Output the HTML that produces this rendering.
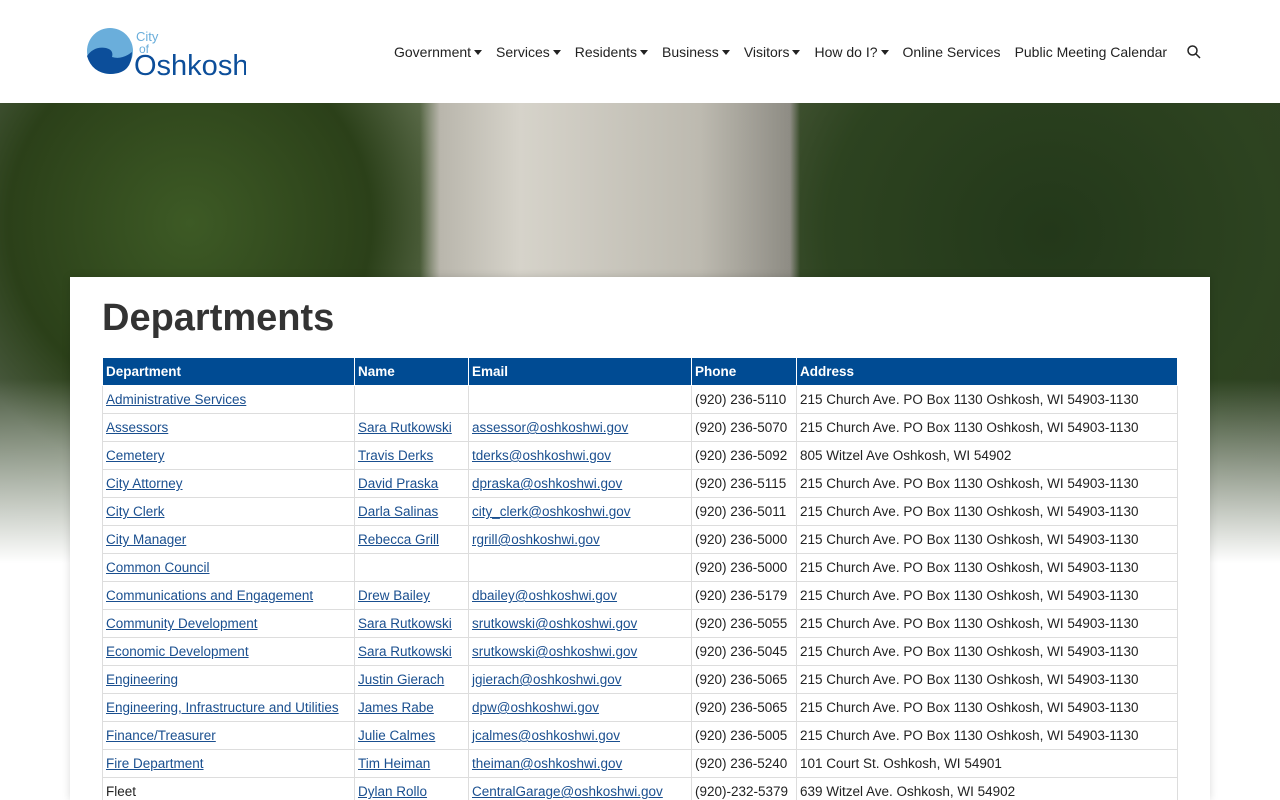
<!DOCTYPE html>
<html style="overflow:hidden"><head><style>
html,body{margin:0;width:1280px;height:800px;overflow:hidden}
body{font-family:"Liberation Sans",sans-serif;background:#fff;position:relative}
header{height:103px;background:#fff;position:relative}
nav{position:absolute;top:44px;left:394px;font-size:14px;color:#222;white-space:nowrap}
nav span{margin-right:14px}
.c::after{content:"";display:inline-block;border-top:5px solid #222;border-left:4px solid transparent;border-right:4px solid transparent;margin-left:3px;vertical-align:2px}
.hero{position:absolute;top:103px;left:0;width:1280px;height:460px;
background:
linear-gradient(to bottom,rgba(255,255,255,0) 0%,rgba(255,255,255,0) 60%,#fff 100%),
linear-gradient(90deg,rgba(0,0,0,0) 0,rgba(0,0,0,0) 420px,#b9b6ac 440px,#d6d3ca 520px,#bdbab0 700px,#8e8c84 790px,rgba(0,0,0,0) 800px),
radial-gradient(ellipse 260px 260px at 190px 120px,#3d5a25,#2b4019 70%,rgba(40,60,25,0) 100%),
radial-gradient(ellipse 320px 300px at 1050px 130px,#23381a,#2d4320 70%,rgba(40,60,25,0) 100%),
linear-gradient(90deg,#4a5a40,#5d6d4a 40%,#3a4a2c 75%,#2e3f22);}
.card{position:absolute;top:277px;left:70px;width:1140px;height:523px;background:#fff;box-shadow:0 0 8px rgba(0,0,0,.15);overflow:hidden}
h1{position:absolute;left:32px;top:20px;margin:0;font-size:38px;font-weight:bold;color:#333}
table{position:absolute;left:32px;top:81px;border-collapse:collapse;font-size:13.5px;color:#222}
th{background:#004b93;color:#fff;text-align:left;height:27px;padding:0 3px;border:1px solid #fff;border-top:0;font-weight:bold}
td{height:27px;padding:0 3px;border:1px solid #ddd;white-space:nowrap}
a{color:#1a4f8f;text-decoration:underline}
</style></head><body>
<header>
<svg style="position:absolute;left:86px;top:26px" width="160" height="52" viewBox="0 0 160 52">
<circle cx="24" cy="25" r="23" fill="#6aaedb"/>
<path d="M1 30 Q8 20 20 22 Q28 24 26 31 Q36 34 46 26 Q46 48 24 48 Q6 47 1 30Z" fill="#0c4e9a"/>
<text x="50" y="15" font-family="Liberation Sans" font-size="13" fill="#6aaedb">City</text>
<text x="53" y="27" font-family="Liberation Sans" font-size="12" fill="#6aaedb">of</text>
<text x="48" y="49" font-family="Liberation Sans" font-size="29" fill="#0c4e9a">Oshkosh</text>
</svg>
<nav><span class="c">Government</span><span class="c">Services</span><span class="c">Residents</span><span class="c">Business</span><span class="c">Visitors</span><span class="c">How do I?</span><span>Online Services</span><span>Public Meeting Calendar</span>
<svg width="14" height="14" viewBox="0 0 14 14" style="vertical-align:-2px;margin-left:2px"><circle cx="5.5" cy="5.5" r="4.5" stroke="#222" stroke-width="1.5" fill="none"/><line x1="9" y1="9" x2="13" y2="13" stroke="#222" stroke-width="1.5"/></svg></nav>
</header>
<div class="hero"></div>
<div class="card">
<h1>Departments</h1>
<table>
<colgroup><col style="width:252px"><col style="width:114px"><col style="width:223px"><col style="width:105px"><col style="width:381px"></colgroup>
<tr><th>Department</th><th>Name</th><th>Email</th><th>Phone</th><th>Address</th></tr>
<tr><td><a>Administrative Services</a></td><td></td><td></td><td>(920) 236-5110</td><td>215 Church Ave. PO Box 1130 Oshkosh, WI 54903-1130</td></tr>
<tr><td><a>Assessors</a></td><td><a>Sara Rutkowski</a></td><td><a>assessor@oshkoshwi.gov</a></td><td>(920) 236-5070</td><td>215 Church Ave. PO Box 1130 Oshkosh, WI 54903-1130</td></tr>
<tr><td><a>Cemetery</a></td><td><a>Travis Derks</a></td><td><a>tderks@oshkoshwi.gov</a></td><td>(920) 236-5092</td><td>805 Witzel Ave Oshkosh, WI 54902</td></tr>
<tr><td><a>City Attorney</a></td><td><a>David Praska</a></td><td><a>dpraska@oshkoshwi.gov</a></td><td>(920) 236-5115</td><td>215 Church Ave. PO Box 1130 Oshkosh, WI 54903-1130</td></tr>
<tr><td><a>City Clerk</a></td><td><a>Darla Salinas</a></td><td><a>city_clerk@oshkoshwi.gov</a></td><td>(920) 236-5011</td><td>215 Church Ave. PO Box 1130 Oshkosh, WI 54903-1130</td></tr>
<tr><td><a>City Manager</a></td><td><a>Rebecca Grill</a></td><td><a>rgrill@oshkoshwi.gov</a></td><td>(920) 236-5000</td><td>215 Church Ave. PO Box 1130 Oshkosh, WI 54903-1130</td></tr>
<tr><td><a>Common Council</a></td><td></td><td></td><td>(920) 236-5000</td><td>215 Church Ave. PO Box 1130 Oshkosh, WI 54903-1130</td></tr>
<tr><td><a>Communications and Engagement</a></td><td><a>Drew Bailey</a></td><td><a>dbailey@oshkoshwi.gov</a></td><td>(920) 236-5179</td><td>215 Church Ave. PO Box 1130 Oshkosh, WI 54903-1130</td></tr>
<tr><td><a>Community Development</a></td><td><a>Sara Rutkowski</a></td><td><a>srutkowski@oshkoshwi.gov</a></td><td>(920) 236-5055</td><td>215 Church Ave. PO Box 1130 Oshkosh, WI 54903-1130</td></tr>
<tr><td><a>Economic Development</a></td><td><a>Sara Rutkowski</a></td><td><a>srutkowski@oshkoshwi.gov</a></td><td>(920) 236-5045</td><td>215 Church Ave. PO Box 1130 Oshkosh, WI 54903-1130</td></tr>
<tr><td><a>Engineering</a></td><td><a>Justin Gierach</a></td><td><a>jgierach@oshkoshwi.gov</a></td><td>(920) 236-5065</td><td>215 Church Ave. PO Box 1130 Oshkosh, WI 54903-1130</td></tr>
<tr><td><a>Engineering, Infrastructure and Utilities</a></td><td><a>James Rabe</a></td><td><a>dpw@oshkoshwi.gov</a></td><td>(920) 236-5065</td><td>215 Church Ave. PO Box 1130 Oshkosh, WI 54903-1130</td></tr>
<tr><td><a>Finance/Treasurer</a></td><td><a>Julie Calmes</a></td><td><a>jcalmes@oshkoshwi.gov</a></td><td>(920) 236-5005</td><td>215 Church Ave. PO Box 1130 Oshkosh, WI 54903-1130</td></tr>
<tr><td><a>Fire Department</a></td><td><a>Tim Heiman</a></td><td><a>theiman@oshkoshwi.gov</a></td><td>(920) 236-5240</td><td>101 Court St. Oshkosh, WI 54901</td></tr>
<tr><td>Fleet</td><td><a>Dylan Rollo</a></td><td><a>CentralGarage@oshkoshwi.gov</a></td><td>(920)-232-5379</td><td>639 Witzel Ave. Oshkosh, WI 54902</td></tr>
</table>
</div>
</body></html>
